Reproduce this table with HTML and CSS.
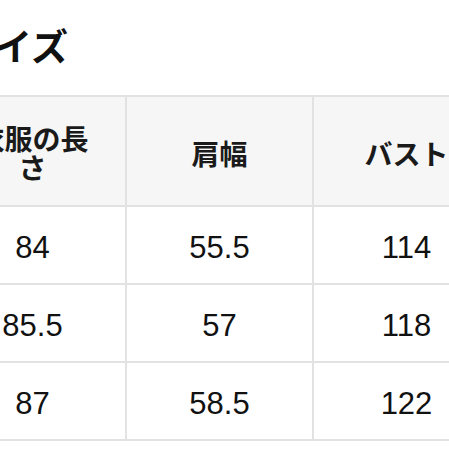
FILE: index.html
```html
<!DOCTYPE html>
<html lang="ja">
<head>
<meta charset="utf-8">
<link rel="stylesheet" href="styles.css">
</head>
<body>
<div class="page">
  <h2 class="title">サイズ</h2>
  <table class="size-table">
    <thead>
      <tr>
        <th>衣服の長さ</th>
        <th>肩幅</th>
        <th>バスト</th>
      </tr>
    </thead>
    <tbody>
      <tr><td>84</td><td>55.5</td><td>114</td></tr>
      <tr><td>85.5</td><td>57</td><td>118</td></tr>
      <tr><td>87</td><td>58.5</td><td>122</td></tr>
    </tbody>
  </table>
</div>
</body>
</html>
```
FILE: styles.css
```css
html, body {
  margin: 0;
  padding: 0;
  background: #ffffff;
  overflow: hidden;
}
body {
  width: 449px;
  height: 449px;
  font-family: "Liberation Sans", "Noto Sans CJK JP", sans-serif;
  color: #111;
}
.page {
  margin-left: -60px;
  width: 600px;
}
.title {
  margin: 0 0 28px 0;
  padding: 23px 0 0 18px;
  font-family: "Noto Sans CJK JP", sans-serif;
  font-size: 37px;
  line-height: 44px;
  font-weight: 700;
  color: #111;
}
.size-table {
  border-collapse: separate;
  border-spacing: 0;
  table-layout: fixed;
  width: 561px;
  border-top: 2px solid #e2e2e2;
}
.size-table th,
.size-table td {
  box-sizing: border-box;
  width: 187px;
  border-right: 2px solid #e2e2e2;
  border-bottom: 2px solid #e2e2e2;
  text-align: center;
  vertical-align: middle;
  padding: 0 28px;
}
.size-table th {
  height: 110px;
  padding-top: 4px;
  background: #f6f6f6;
  font-family: "Noto Sans CJK JP", sans-serif;
  font-size: 28px;
  line-height: 29px;
  font-weight: 700;
  color: #1a1a1a;
}
.size-table td {
  height: 78px;
  padding-top: 6px;
  font-size: 31px;
  font-weight: 400;
  color: #111;
}
```
